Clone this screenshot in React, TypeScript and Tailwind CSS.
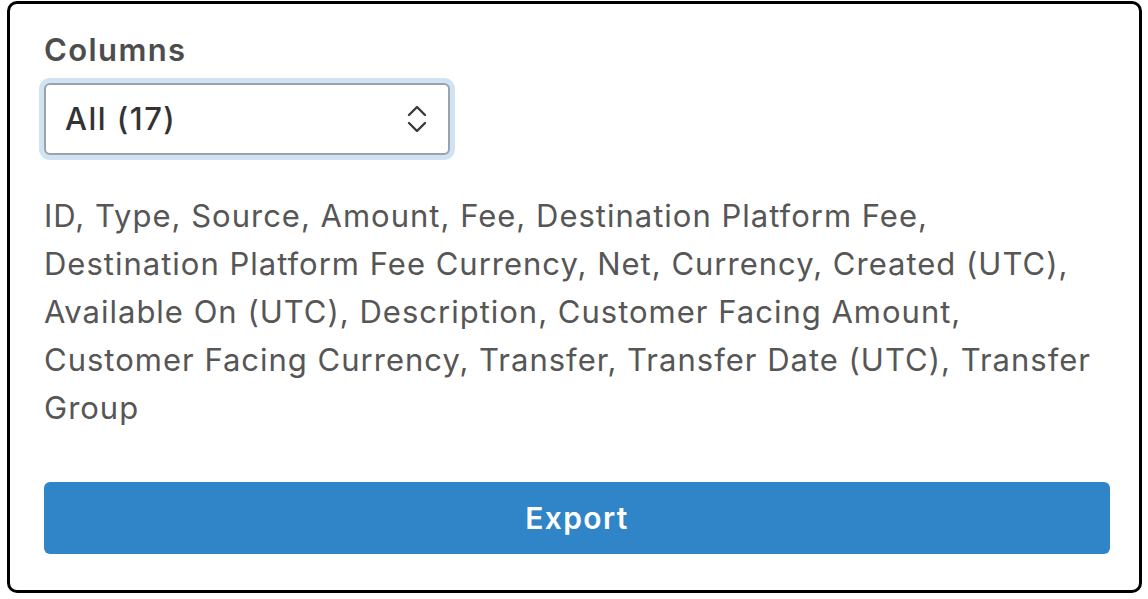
import React from 'react';

const columns = [
  'ID', 'Type', 'Source', 'Amount', 'Fee', 'Destination Platform Fee',
  'Destination Platform Fee Currency', 'Net', 'Currency', 'Created (UTC)',
  'Available On (UTC)', 'Description', 'Customer Facing Amount',
  'Customer Facing Currency', 'Transfer', 'Transfer Date (UTC)', 'Transfer Group',
];

export default function App() {
  return (
    <div className="w-[1148px] h-[599px] bg-white pl-[7px] pt-[1px]" style={{ fontFamily: 'Inter, "Noto Sans", sans-serif' }}>
      <div className="w-[1135px] h-[592px] border-[3px] border-black rounded-[10px] pl-[34px] pr-[29px] pt-[26px]">
        {/* Label */}
        <label className="block text-[31px] leading-[40px] font-semibold tracking-[1.4px] text-[#4d4d4d]">Columns</label>

        {/* Select */}
        <div className="mt-[13px] w-[406px] h-[72px] rounded-[6px] border-2 border-[#9aa3ad] bg-white shadow-[0_0_0_5px_#cfe3f3] flex items-center justify-between pl-[19px] pr-[20px]">
          <span className="text-[31px] font-medium tracking-[1.5px] text-[#333]">All (17)</span>
          <svg width="22" height="30" viewBox="0 0 22 30" fill="none" stroke="#3a3a3a" strokeWidth="2.4" strokeLinecap="round" strokeLinejoin="round">
            <path d="M3 11 L11 3 L19 11" />
            <path d="M3 19 L11 27 L19 19" />
          </svg>
        </div>

        {/* Column list */}
        <p className="mt-[37px] text-[31px] leading-[48px] tracking-[1px] text-[#565656]">
          {columns.join(', ')}
        </p>

        {/* Export */}
        <button className="mt-[50px] w-full h-[72px] rounded-[6px] bg-[#3085c8] text-white text-[30px] font-semibold tracking-[1.4px]">
          Export
        </button>
      </div>
    </div>
  );
}
